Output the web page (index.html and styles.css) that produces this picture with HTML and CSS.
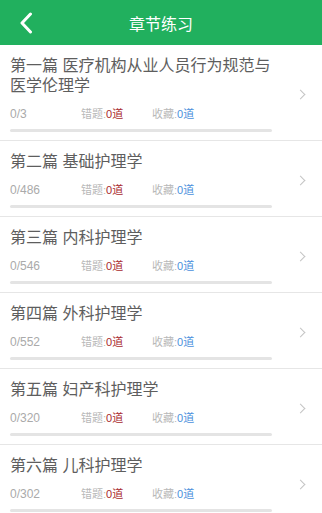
FILE: index.html
```html
<!DOCTYPE html>
<html lang="zh-CN">
<head>
    <meta charset="UTF-8">
    <meta name="viewport" content="width=device-width, initial-scale=1.0">
    <title>章节练习</title>
    <link rel="stylesheet" href="styles.css">
</head>
<body>
    <header class="topbar">
        <a class="back" href="#">
            <svg width="14" height="22" viewBox="0 0 14 22">
                <path d="M11.5 2 L3 11 L11.5 20" fill="none" stroke="#fff" stroke-width="3" stroke-linecap="round" stroke-linejoin="round"/>
            </svg>
        </a>
        <h1>章节练习</h1>
    </header>

    <ul class="chapters">
        <li class="chapter">
            <div class="chapter-body">
                <p class="chapter-title">第一篇 医疗机构从业人员行为规范与医学伦理学</p>
                <div class="stats">
                    <span class="done">0/3</span>
                    <span class="wrong">错题:<em>0道</em></span>
                    <span class="fav">收藏:<em>0道</em></span>
                </div>
                <div class="progress"><div class="progress-fill" style="width: 0%"></div></div>
            </div>
            <span class="arrow"></span>
        </li>
        <li class="chapter">
            <div class="chapter-body">
                <p class="chapter-title">第二篇 基础护理学</p>
                <div class="stats">
                    <span class="done">0/486</span>
                    <span class="wrong">错题:<em>0道</em></span>
                    <span class="fav">收藏:<em>0道</em></span>
                </div>
                <div class="progress"><div class="progress-fill" style="width: 0%"></div></div>
            </div>
            <span class="arrow"></span>
        </li>
        <li class="chapter">
            <div class="chapter-body">
                <p class="chapter-title">第三篇 内科护理学</p>
                <div class="stats">
                    <span class="done">0/546</span>
                    <span class="wrong">错题:<em>0道</em></span>
                    <span class="fav">收藏:<em>0道</em></span>
                </div>
                <div class="progress"><div class="progress-fill" style="width: 0%"></div></div>
            </div>
            <span class="arrow"></span>
        </li>
        <li class="chapter">
            <div class="chapter-body">
                <p class="chapter-title">第四篇 外科护理学</p>
                <div class="stats">
                    <span class="done">0/552</span>
                    <span class="wrong">错题:<em>0道</em></span>
                    <span class="fav">收藏:<em>0道</em></span>
                </div>
                <div class="progress"><div class="progress-fill" style="width: 0%"></div></div>
            </div>
            <span class="arrow"></span>
        </li>
        <li class="chapter">
            <div class="chapter-body">
                <p class="chapter-title">第五篇 妇产科护理学</p>
                <div class="stats">
                    <span class="done">0/320</span>
                    <span class="wrong">错题:<em>0道</em></span>
                    <span class="fav">收藏:<em>0道</em></span>
                </div>
                <div class="progress"><div class="progress-fill" style="width: 0%"></div></div>
            </div>
            <span class="arrow"></span>
        </li>
        <li class="chapter">
            <div class="chapter-body">
                <p class="chapter-title">第六篇 儿科护理学</p>
                <div class="stats">
                    <span class="done">0/302</span>
                    <span class="wrong">错题:<em>0道</em></span>
                    <span class="fav">收藏:<em>0道</em></span>
                </div>
                <div class="progress"><div class="progress-fill" style="width: 0%"></div></div>
            </div>
            <span class="arrow"></span>
        </li>
    </ul>
</body>
</html>
```

FILE: styles.css
```css
:root {
    --color-green: #21b05e;
    --color-title: #5e5e5e;
    --color-muted: #b8b8b8;
    --color-red: #a8282c;
    --color-blue: #4a8fdc;
    --color-line: #e6e6e6;
    --color-bar: #e4e4e4;
}
body {
    margin: 0;
    font-family: "Liberation Sans", "Noto Sans CJK SC", sans-serif;
    background: #ffffff;
    overflow: hidden;
}
.topbar {
    height: 45px;
    background-color: var(--color-green);
    display: flex;
    align-items: center;
    justify-content: center;
    position: relative;
}
.topbar h1 {
    margin: 0;
    font-size: 16px;
    font-weight: normal;
    color: #fff;
}
.back {
    position: absolute;
    left: 19px;
    top: 12px;
    display: flex;
}
.chapters {
    list-style: none;
    margin: 0;
    padding: 0;
}
.chapter {
    display: flex;
    align-items: center;
    padding: 11px 18px 8px 10px;
    border-bottom: 1px solid var(--color-line);
}
.chapter-body {
    flex: 1;
    min-width: 0;
}
.chapter-title {
    margin: 0;
    font-size: 16px;
    line-height: 20px;
    color: var(--color-title);
}
.stats {
    display: flex;
    align-items: baseline;
    margin-top: 10px;
    font-size: 11px;
    line-height: 16px;
    color: var(--color-muted);
}
.stats span {
    width: 71px;
}
.stats em {
    font-style: normal;
}
.stats .done {
    font-size: 12px;
    color: #aaaaaa;
}
.wrong em {
    color: var(--color-red);
}
.fav em {
    color: var(--color-blue);
}
.progress {
    margin-top: 7px;
    height: 3px;
    border-radius: 2px;
    background: var(--color-bar);
    overflow: hidden;
}
.progress-fill {
    height: 100%;
    background: var(--color-green);
}
.arrow {
    flex: none;
    margin-left: 25px;
    width: 6px;
    height: 6px;
    border-top: 1px solid #c4c4c4;
    border-right: 1px solid #c4c4c4;
    transform: rotate(45deg);
}
```
